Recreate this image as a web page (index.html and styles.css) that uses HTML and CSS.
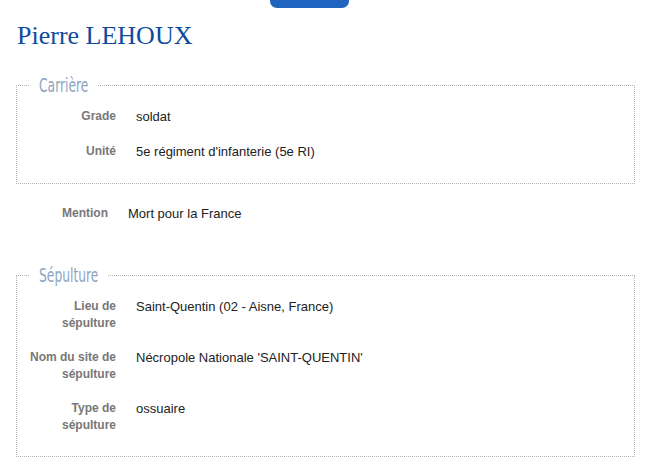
FILE: index.html
```html
<!DOCTYPE html>
<html lang="fr">
<head>
  <meta charset="UTF-8" />
  <meta name="viewport" content="width=device-width, initial-scale=1.0"/>
  <title>Pierre LEHOUX</title>
  <link rel="stylesheet" href="styles.css">
</head>
<body>
  <div class="tab"></div>
  <div class="page">
    <h1>Pierre LEHOUX</h1>

    <fieldset class="group">
      <legend><span class="carriere">Carrière</span></legend>
      <div class="row">
        <div class="label">Grade</div>
        <div class="value">soldat</div>
      </div>
      <div class="row">
        <div class="label">Unité</div>
        <div class="value">5e régiment d'infanterie (5e RI)</div>
      </div>
    </fieldset>

    <div class="row loose">
      <div class="label">Mention</div>
      <div class="value">Mort pour la France</div>
    </div>

    <fieldset class="group">
      <legend><span class="sepulture">Sépulture</span></legend>
      <div class="row">
        <div class="label">Lieu de sépulture</div>
        <div class="value">Saint-Quentin (02 - Aisne, France)</div>
      </div>
      <div class="row">
        <div class="label">Nom du site de sépulture</div>
        <div class="value">Nécropole Nationale 'SAINT-QUENTIN'</div>
      </div>
      <div class="row">
        <div class="label">Type de sépulture</div>
        <div class="value">ossuaire</div>
      </div>
    </fieldset>
  </div>
</body>
</html>
```

FILE: styles.css
```css
* {
  margin: 0;
  padding: 0;
  box-sizing: border-box;
}

body {
  background-color: #fff;
  color: #222;
  font-family: "Liberation Sans", Arial, sans-serif;
}

.tab {
  width: 79px;
  height: 8px;
  margin-left: 270px;
  background-color: #1f64bf;
  border-radius: 0 0 7px 7px;
}

.page {
  padding: 13px 11px 0 16px;
}

h1 {
  font-family: "Liberation Serif", "Times New Roman", serif;
  font-weight: normal;
  font-size: 26px;
  line-height: 30px;
  color: #0e4c9c;
  padding-left: 1px;
}

.group {
  border: 1px dotted #b5b5b5;
  padding: 11px 7px 5px 7px;
  margin-top: 22px;
}

legend {
  font-family: "DejaVu Sans Condensed", "Liberation Sans", sans-serif;
  font-size: 19px;
  line-height: 24px;
  color: #8da4c1;
  margin-left: 6px;
  padding: 0 9px;
}

/* condensed title face, squeezed to the narrow width of the original */
legend span {
  display: inline-block;
  white-space: nowrap;
  transform: scaleX(0.72);
  transform-origin: left center;
}

.carriere {
  width: 50px;
}

.sepulture {
  width: 60px;
}

.row {
  display: grid;
  grid-template-columns: 92px 1fr;
  column-gap: 20px;
  margin-bottom: 17px;
}

.loose {
  margin-top: 21px;
  margin-bottom: 40px;
}

.label {
  text-align: right;
  font-weight: bold;
  font-size: 12px;
  line-height: 17px;
  color: #777;
}

.value {
  font-size: 13px;
  line-height: 18px;
  color: #222;
}
```
